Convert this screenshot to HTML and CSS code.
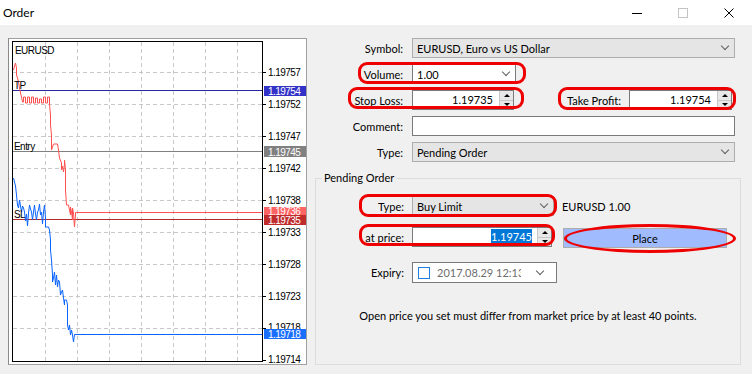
FILE: index.html
```html
<!DOCTYPE html>
<html>
<head>
<meta charset="utf-8">
<link rel="stylesheet" href="styles.css">
</head>
<body>
<div class="titlebar">
  <span class="title">Order</span>
  <div class="caption">
    <div class="cbtn"><svg width="10" height="10" viewBox="0 0 10 10"><path d="M0 5.5H10" stroke="#000" stroke-width="1"/></svg></div>
    <div class="cbtn"><svg width="10" height="10" viewBox="0 0 10 10"><rect x="0.5" y="0.5" width="9" height="9" fill="none" stroke="#c4c4c4"/></svg></div>
    <div class="cbtn"><svg width="10" height="10" viewBox="0 0 10 10"><path d="M0.5 0.5L9.5 9.5M9.5 0.5L0.5 9.5" stroke="#000" stroke-width="1"/></svg></div>
  </div>
</div>
<div class="main">
  <div class="chart">
    <svg width="297" height="325" viewBox="9 39 297 325">
      <rect x="9" y="39" width="297" height="325" fill="#fff"/>
      <g stroke="#c8c8c8" stroke-width="1" stroke-dasharray="4 3" fill="none">
        <path d="M45.5 42V361M77.5 42V361M109.5 42V361M141.5 42V361M173.5 42V361M205.5 42V361M237.5 42V361"/>
        <path d="M13 72.5H262M13 104.5H262M13 136.5H262M13 168.5H262M13 200.5H262M13 232.5H262M13 264.5H262M13 296.5H262M13 328.5H262"/>
      </g>
      <path d="M13 90.5H262" stroke="#2a2aa0" stroke-width="1"/>
      <path d="M13 151.5H262" stroke="#808080" stroke-width="1"/>
      <path d="M13 219.5H262" stroke="#b02a2a" stroke-width="1"/>
      <polyline fill="none" stroke="#ff5050" stroke-width="1" points="13.5,70 14.5,66 15.5,63 16.5,68 16.5,75 17.5,78 18.5,82 19.5,88 20.5,93 21.5,97 22.5,102 23.5,102 23.5,97 25.5,97 25.5,103 27.5,103 27.5,97 29.5,97 29.5,103 31.5,103 31.5,97 33.5,97 33.5,103 35.5,103 35.5,98 37.5,98 37.5,103 39.5,103 39.5,99 41.5,99 41.5,103 43.5,103 43.5,97 45.5,97 45.5,103 47.5,103 47.5,97 49.5,97 49.5,104 50.5,115 50.5,125 51.5,135 51.5,150 53.5,144 57.5,144 58.5,150 59.5,158 61.5,163 61.5,170 62.5,166 63.5,172 64.5,164 64.5,160 65.5,170 65.5,190 66.5,205 68.5,205 69.5,210 70.5,215 70.5,207 71.5,212 72.5,220 72.5,208 73.5,213 74.5,227 75.5,215 75.5,212.5 262,212.5"/>
      <polyline fill="none" stroke="#0a64ff" stroke-width="1" points="13.5,178 14.5,182 15.5,186 16.5,195 17.5,205 18.5,208 19.5,200 20.5,206 21.5,212 22.5,206 23.5,208 24.5,212 25.5,221 26.5,214 27.5,226 28.5,213 29.5,205 30.5,209 31.5,212 32.5,220 33.5,212 34.5,205 35.5,214 36.5,220 37.5,212 38.5,210 39.5,204 40.5,215 41.5,212 42.5,224 43.5,212 44.5,205 45.5,218 45.5,227 48.5,227 49.5,230 50.5,240 50.5,250 51.5,260 52.5,275 52.5,282 53.5,278 54.5,272 55.5,285 56.5,275 57.5,287 58.5,280 59.5,282 60.5,295 61.5,292 62.5,290 63.5,298 64.5,305 64.5,300 66.5,300 67.5,305 67.5,325 68.5,330 69.5,325 70.5,335 71.5,330 72.5,335 73.5,342 74.5,334.5 262,334.5"/>
      <rect x="12.5" y="41.5" width="250" height="320" fill="none" stroke="#000" stroke-width="1"/>
      <g stroke="#000" stroke-width="1">
        <path d="M263 72.5H266M263 104.5H266M263 136.5H266M263 168.5H266M263 200.5H266M263 232.5H266M263 264.5H266M263 296.5H266M263 328.5H266M263 360.5H266"/>
      </g>
      <g class="ax" fill="#000">
        <text x="268" y="76">1.19757</text>
        <text x="268" y="108">1.19752</text>
        <text x="268" y="140">1.19747</text>
        <text x="268" y="172">1.19742</text>
        <text x="268" y="204">1.19738</text>
        <text x="268" y="236">1.19733</text>
        <text x="268" y="268">1.19728</text>
        <text x="268" y="300">1.19723</text>
        <text x="268" y="331">1.19718</text>
        <text x="268" y="363">1.19714</text>
      </g>
      <rect x="264" y="86" width="42" height="10" fill="#3232c8"/>
      <rect x="264" y="146" width="42" height="11" fill="#808080"/>
      <rect x="264" y="207" width="42" height="9" fill="#ff6464"/>
      <rect x="264" y="215" width="42" height="10" fill="#c02c2c"/>
      <rect x="264" y="329" width="42" height="10" fill="#1a6eff"/>
      <g class="ax" fill="#fff">
        <text x="268" y="95">1.19754</text>
        <text x="268" y="155.5">1.19745</text>
        <text x="268" y="215">1.19736</text>
        <text x="268" y="224">1.19735</text>
        <text x="268" y="338">1.19718</text>
      </g>
      <g class="ax" fill="#000">
        <text x="15" y="54">EURUSD</text>
        <text x="14" y="89">TP</text>
        <text x="14" y="150">Entry</text>
        <text x="14" y="218">SL</text>
      </g>
    </svg>
  </div>
  <div class="form">
    <div class="row">
      <span class="lbl">Symbol:</span>
      <div class="combo gray w-full">EURUSD, Euro vs US Dollar<span class="chev"></span></div>
    </div>
    <div class="row">
      <span class="lbl">Volume:</span>
      <div class="combo white w-vol">1.00<span class="chev"></span></div>
      <span class="hl hl-vol"></span>
    </div>
    <div class="row">
      <span class="lbl">Stop Loss:</span>
      <div class="spin w-sl"><span class="val">1.19735</span><span class="arrows"><span class="up"></span><span class="dn"></span></span></div>
      <span class="hl hl-sl"></span>
      <span class="tp-lbl">Take Profit:</span>
      <div class="spin w-tp"><span class="val">1.19754</span><span class="arrows"><span class="up"></span><span class="dn"></span></span></div>
      <span class="hl hl-tp"></span>
    </div>
    <div class="row">
      <span class="lbl">Comment:</span>
      <div class="edit w-full"></div>
    </div>
    <div class="row">
      <span class="lbl">Type:</span>
      <div class="combo gray w-full">Pending Order<span class="chev"></span></div>
    </div>
    <div class="group">
      <span class="legend">Pending Order</span>
      <div class="row g-type">
        <span class="lbl">Type:</span>
        <div class="combo gray w-ptype">Buy Limit<span class="chev"></span></div>
        <span class="info-sym">EURUSD 1.00</span>
        <span class="hl hl-ptype"></span>
      </div>
      <div class="row g-price">
        <span class="lbl">at price:</span>
        <div class="spin w-price"><span class="val"><span class="sel">1.19745</span></span><span class="arrows"><span class="up"></span><span class="dn"></span></span></div>
        <button class="place">Place</button>
        <span class="hl hl-price"></span>
        <span class="hl hl-place"></span>
      </div>
      <div class="row g-exp">
        <span class="lbl">Expiry:</span>
        <div class="expiry"><span class="chk"></span><span class="date">2017.08.29 12:13</span><span class="chev"></span></div>
      </div>
      <p class="note">Open price you set must differ from market price by at least 40 points.</p>
    </div>
  </div>
</div>
</body>
</html>
```
FILE: styles.css
```css
html, body { margin: 0; padding: 0; }
body {
  width: 752px;
  height: 374px;
  overflow: hidden;
  background: #f0f0f0;
  font-family: Lato, "Liberation Sans", Arial, sans-serif;
  font-size: 11px;
  color: #000;
}
.titlebar {
  height: 25px;
  background: #fff;
  display: flex;
  align-items: center;
}
.title { margin-left: 3px; font-size: 12px; }
.caption { margin-left: auto; display: flex; height: 25px; }
.cbtn { width: 46px; display: flex; align-items: center; justify-content: center; }
.cbtn svg { display: block; }

.main { display: flex; }
.chart {
  margin: 13px 0 0 8px;
  width: 297px;
  height: 325px;
  border: 1px solid #a0a0a0;
  border-left: 1px solid #8a8a8a;
}
.chart svg { display: block; }
.ax { font-family: "Liberation Sans", Arial, sans-serif; font-size: 10px; letter-spacing: -0.55px; }

.form { margin-left: 8px; width: 426px; padding-top: 13px; }
.row {
  position: relative;
  display: flex;
  align-items: center;
  height: 20px;
  margin-bottom: 6px;
}
.lbl { width: 88px; flex: none; text-align: right; margin-right: 9px; }
.combo, .edit, .spin, .expiry {
  box-sizing: border-box;
  height: 20px;
  flex: none;
}
.combo {
  display: flex;
  align-items: center;
  padding-left: 4px;
  border: 1px solid #adadad;
  position: relative;
}
.combo.gray { background: #e5e5e5; }
.combo.white { background: #fff; border-color: #7a7a7a; }
.chev {
  margin-left: auto;
  margin-right: 6px;
  width: 5px;
  height: 5px;
  border-right: 1px solid #606060;
  border-bottom: 1px solid #606060;
  transform: translateY(-2px) rotate(45deg);
}
.w-full { width: 323px; }
.w-vol { width: 104px; }
.edit { background: #fff; border: 1px solid #7a7a7a; }

.spin {
  display: flex;
  background: #fff;
  border: 1px solid #7a7a7a;
}
.spin .val { flex: 1; text-align: right; padding-right: 6px; line-height: 18px; }
.spin .arrows {
  width: 13px;
  display: flex;
  flex-direction: column;
  background: #e8e8e8;
  border-left: 1px solid #c8c8c8;
}
.arrows .up, .arrows .dn {
  flex: 1;
  display: flex;
  align-items: center;
  justify-content: center;
}
.arrows .up { border-bottom: 1px solid #c8c8c8; }
.arrows .up::before {
  content: "";
  border-left: 3px solid transparent;
  border-right: 3px solid transparent;
  border-bottom: 3px solid #000;
}
.arrows .dn::before {
  content: "";
  border-left: 3px solid transparent;
  border-right: 3px solid transparent;
  border-top: 3px solid #000;
}
.w-sl { width: 102px; }
.tp-lbl { margin-left: auto; margin-right: 8px; }
.w-tp { width: 103px; margin-right: 9px; }

.hl {
  position: absolute;
  box-sizing: border-box;
  border: 3px solid #ee0000;
  border-radius: 9px;
  pointer-events: none;
}
.hl-vol { left: 43px; top: -2px; width: 168px; height: 22px; }
.hl-sl { left: 33px; top: -3px; width: 176px; height: 22px; }
.hl-tp { left: 243px; top: -3px; width: 178px; height: 23px; }

.group {
  position: relative;
  margin-top: 16px;
  border: 1px solid #dcdcdc;
  padding-top: 17px;
  height: 168px;
}
.legend {
  position: absolute;
  left: 6px;
  top: -8px;
  padding: 0 2px;
  background: #f0f0f0;
  line-height: 14px;
}
.group .row { margin-bottom: 0; }
.group .lbl { margin-right: 8px; }
.g-price { margin-top: 11px; }
.g-exp { margin-top: 15px; height: 21px; }
.w-ptype { width: 142px; }
.info-sym { margin-left: 8px; }
.w-price { width: 140px; }
.w-price .val { padding-right: 5px; }
.sel { background: #0078d7; color: #fff; padding: 1px 0; }
.place {
  margin: 0 0 0 11px;
  width: 164px;
  height: 20px;
  padding: 0;
  background: #a0bcff;
  border: 1px solid #adadad;
  font: inherit;
  color: #000;
  position: relative;
  top: 1px;
}
.hl-ptype { left: 43px; top: -2px; width: 198px; height: 23px; }
.hl-price { left: 43px; top: -3px; width: 196px; height: 22px; }
.hl-place { left: 248px; top: -3px; width: 172px; height: 29px; border-radius: 50%; }

.expiry {
  width: 145px;
  height: 21px;
  background: #fff;
  border: 1px solid #7a7a7a;
  display: flex;
  align-items: center;
}
.chk {
  width: 12px;
  height: 12px;
  box-sizing: border-box;
  border: 1px solid #1e7fe0;
  margin-left: 5px;
  flex: none;
}
.date {
  margin-left: 7px;
  color: #6d6d6d;
  width: 84px;
  overflow: hidden;
  white-space: nowrap;
  flex: none;
}
.expiry .chev { margin-right: 13px; }
.note {
  margin: 26px 0 0 0;
  text-align: center;
  line-height: 14px;
}
```
